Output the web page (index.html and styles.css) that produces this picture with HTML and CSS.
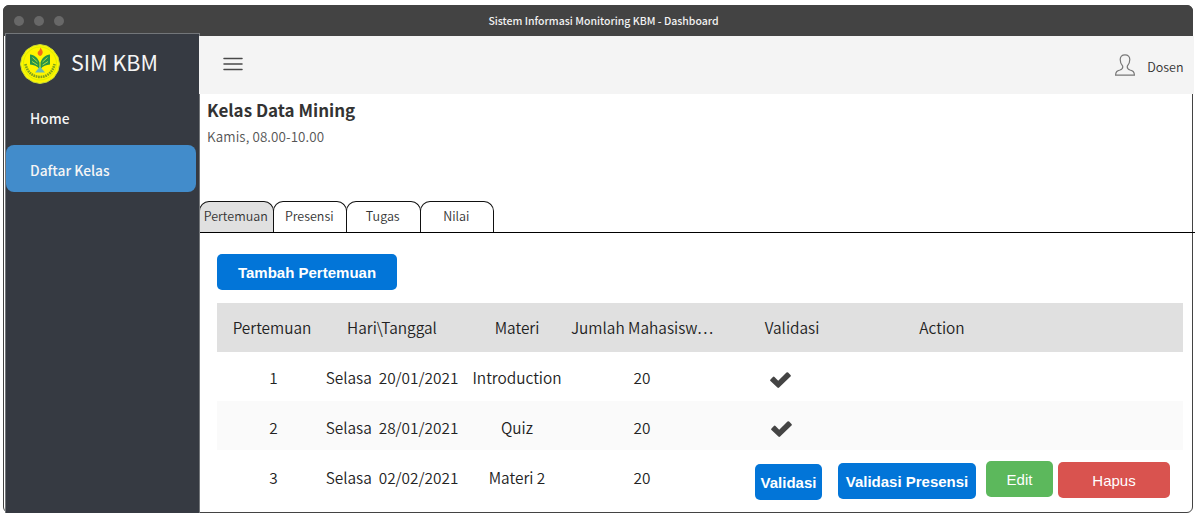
FILE: index.html
```html
<!DOCTYPE html>
<html lang="id">
<head>
<meta charset="utf-8">
<title>Sistem Informasi Monitoring KBM - Dashboard</title>
<link rel="stylesheet" href="styles.css">
</head>
<body>
<div class="window">
  <header class="titlebar">
    <div class="dots"><i></i><i></i><i></i></div>
    <div class="title"><span>Sistem Informasi Monitoring KBM - Dashboard</span></div>
  </header>
  <div class="layout">
    <aside class="sidebar">
      <div class="brand">
        <svg class="logo" viewBox="0 0 40 40">
          <path d="M20 .5 27 2l6 4 5 7 1.500 7-1.500 7-4.500 7-6.500 4-7 1.500-7-1.500-7-4.500-4-6.500L.5 20 2 13l4.500-7L13 2z" fill="#fff500" stroke="#c6d934" stroke-width="1"/>
          <circle cx="20" cy="19.500" r="16.500" fill="none" stroke="#d6f000" stroke-width="1"/>
          <path d="M19.500 25C17 22 14 21 10 20.500v-10c4.500.5 8 3.500 9.500 8zM20.500 25c2.500-3 5.500-4 9.500-4.500v-10c-4.500.5-8 3.500-9.500 8z" fill="#269447"/>
          <path d="M12.500 13.500l5 4.500M12 17.500l5.500 3.500M27.500 13.500l-5 4.500M28 17.500 22.500 21" stroke="#b5dc3a" stroke-width="1" fill="none"/>
          <path d="M20 22.500 15 28.500h10z" fill="#67b9b3"/>
          <path d="M20.500 3.500c1 2 3 4 2 6-.5 1.500-1.500 2.500-2.500 2.500-2-.5-3-2.500-2-4.500 1 0 2-2 2.500-4z" fill="#f26a1b"/>
          <path d="M5.500 20c1.500 8 7.500 13 14.500 13s13-5 14.500-13" fill="none" stroke="#7fa41c" stroke-width="2.600" stroke-dasharray="1.700 .7"/>
        </svg>
        <span>SIM KBM</span>
      </div>
      <a class="nav">Home</a>
      <a class="nav active">Daftar Kelas</a>
    </aside>
    <main class="main">
      <div class="topbar">
        <svg class="menu" viewBox="0 0 20 14"><path d="M1 1.500h18M1 7h18M1 12.500h18" stroke="#484848" stroke-width="1.500" stroke-linecap="round"/></svg>
        <div class="user">
          <svg class="person" viewBox="0 0 20 22"><path d="M10 .8C6.900.8 5.200 2.700 5.200 5.600c0 2.600.7 4.800 2.400 6.400.6 2.300-.4 3.300-2.600 4-2.800.8-4.300 1.400-4.400 5.100h18.800c-.1-3.700-1.600-4.300-4.400-5.100-2.200-.7-3.200-1.700-2.600-4 1.700-1.600 2.400-3.800 2.400-6.400C14.800 2.700 13.100.8 10 .8z" fill="none" stroke="#777" stroke-width="1.200"/></svg>
          <span>Dosen</span>
        </div>
      </div>
      <div class="heading">
        <h1>Kelas Data Mining</h1>
        <p>Kamis, 08.00-10.00</p>
      </div>
      <nav class="tabs">
        <a class="tab selected">Pertemuan</a><a class="tab">Presensi</a><a class="tab">Tugas</a><a class="tab">Nilai</a>
      </nav>
      <div class="content">
        <button class="btn primary add">Tambah Pertemuan</button>
        <div class="table">
          <div class="row head"><span>Pertemuan</span><span>Hari\Tanggal</span><span>Materi</span><span>Jumlah Mahasisw…</span><span>Validasi</span><span>Action</span></div>
          <div class="row first"><span>1</span><span>Selasa&nbsp; 20/01/2021</span><span>Introduction</span><span>20</span>
            <svg class="check" viewBox="0 0 21 16"><path d="M.5 7.400 2.900 5q.8-.8 1.600 0l3.700 3.700L16.500.6q.8-.8 1.600 0l2.400 2.400q.8.800 0 1.600L9.100 15.500q-.9.800-1.700 0L.5 9q-.8-.8 0-1.600z" fill="#444"/></svg></div>
          <div class="row second"><span>2</span><span>Selasa&nbsp; 28/01/2021</span><span>Quiz</span><span>20</span>
            <svg class="check" viewBox="0 0 21 16"><path d="M.5 7.400 2.900 5q.8-.8 1.600 0l3.700 3.700L16.500.6q.8-.8 1.600 0l2.400 2.400q.8.800 0 1.600L9.100 15.500q-.9.800-1.700 0L.5 9q-.8-.8 0-1.600z" fill="#444"/></svg></div>
          <div class="row third"><span>3</span><span>Selasa&nbsp; 02/02/2021</span><span>Materi 2</span><span>20</span>
            <div class="actions">
              <button class="btn primary validate">Validasi</button>
              <button class="btn primary attendance">Validasi Presensi</button>
              <button class="btn success">Edit</button>
              <button class="btn danger">Hapus</button>
            </div>
          </div>
        </div>
      </div>
    </main>
  </div>
</div>
</body>
</html>
```
FILE: styles.css
```css
* { box-sizing: border-box; }
body {
  margin: 0;
  padding: 5px 0 0 3px;
  background: #fff;
  color: #333;
  font-family: "Noto Sans CJK JP", "Noto Sans", sans-serif;
  overflow: hidden;
}
.window {
  width: 1190px;
  height: 508px;
  border: 1px solid #434343;
  border-radius: 6px;
}
.titlebar {
  display: flex;
  align-items: center;
  height: 31px;
  margin: -1px -1px 0;
  padding-left: 11.400px;
  background: #434343;
  border-radius: 6px 6px 0 0;
}
.dots { display: flex; gap: 10px; width: 50px; }
.dots i { width: 10px; height: 10px; border-radius: 50%; background: #686868; }
.title {
  flex: 1;
  padding-left: 424px;
  color: #f2f2f2;
  font-size: 10.500px;
  font-weight: 500;
  line-height: 16px;
}
.layout { display: flex; height: 477px; }
.sidebar {
  flex: none;
  width: 195px;
  height: 481px;
  margin: -3px 0 0 1px;
  background: #363a42;
  border: 1px solid #73767a;
  position: relative;
}
.brand {
  display: flex;
  align-items: center;
  gap: 11px;
  height: 60px;
  padding-left: 14px;
  color: #f5f5f5;
  font-size: 21.500px;
  line-height: 30px;
}
.brand span { padding-bottom: 4px; }
.logo { width: 40px; height: 40px; }
.nav {
  display: block;
  height: 47px;
  padding: 12px 0 0 24px;
  margin-right: 3px;
  color: #f5f5f5;
  font-size: 13.800px;
  font-weight: 500;
  line-height: 24px;
}
.nav.active { margin-top: 4px; padding-top: 13px; background: #428ccb; border-radius: 8px; }
.main { flex: none; width: 995px; }
.topbar {
  display: flex;
  align-items: center;
  justify-content: space-between;
  width: 995px;
  height: 58px;
  padding: 0 10.500px 0 24px;
  margin-left: -1px;
  background: #f4f4f4;
  position: relative;
}
.menu { width: 20px; height: 14px; margin-top: -2px; }
.user { display: flex; align-items: center; gap: 12px; font-size: 12.500px; font-weight: 350; line-height: 20px; }
.user span { padding-top: 3px; }
.person { width: 20px; height: 22px; }
.heading { height: 108px; padding: 4px 0 0 7px; }
h1 { margin: 0; font-size: 17px; font-weight: 700; line-height: 24px; }
p { margin: 4px 0 0; color: #555; font-size: 13.400px; font-weight: 350; line-height: 20px; letter-spacing: .1px; }
.tabs { display: flex; height: 31px; margin-left: -1px; border-bottom: 1px solid #000; }
.tab {
  width: 74.500px;
  height: 31px;
  margin: -1px -1px 0 0;
  padding-right: 1px;
  border: 1px solid #111;
  border-bottom: 0;
  border-radius: 10px 10px 0 0;
  font-size: 12.500px;
  font-weight: 350;
  line-height: 28px;
  text-align: center;
}
.selected { background: #e0e0e0; }
.content { padding: 21px 0 0 17px; }
.btn {
  height: 36px;
  padding: 2px 0 0;
  border: 0;
  border-radius: 5px;
  color: #fff;
  font: 15px/34px "Liberation Sans", Arial, sans-serif;
}
.primary { background: #0275d8; font-weight: 700; }
.add { display: block; width: 180px; }
.table { width: 966px; margin-top: 13px; font-size: 15.400px; font-weight: 350; color: #222; }
.row {
  display: grid;
  grid-template-columns: 113px 124px 126px 124px 176px 124px 1fr;
  justify-items: center;
  height: 49px;
  line-height: 24px;
  white-space: nowrap;
}
.head { background: #e0e0e0; padding-top: 12px; grid-template-columns: 110px 130px 120px 130px 170px 130px 1fr; }
.first { padding-top: 13px; }
.second { padding-top: 14px; background: #fafafa; }
.third { padding-top: 15px; }
.check { width: 21px; height: 16px; justify-self: start; margin: 7px 0 0 66px; }
.second .check { margin: 6px 0 0 67px; }
.actions { grid-column: 5 / -1; justify-self: start; display: flex; margin: -4px 0 0 51px; }
.validate { width: 67px; margin: 3px 16px 0 0; }
.attendance { width: 138px; margin: 2px 10px 0 0; }
.success { width: 67px; margin-right: 5px; background: #5cb85c; }
.danger { width: 112px; margin-top: 1px; background: #d9534f; }
```
